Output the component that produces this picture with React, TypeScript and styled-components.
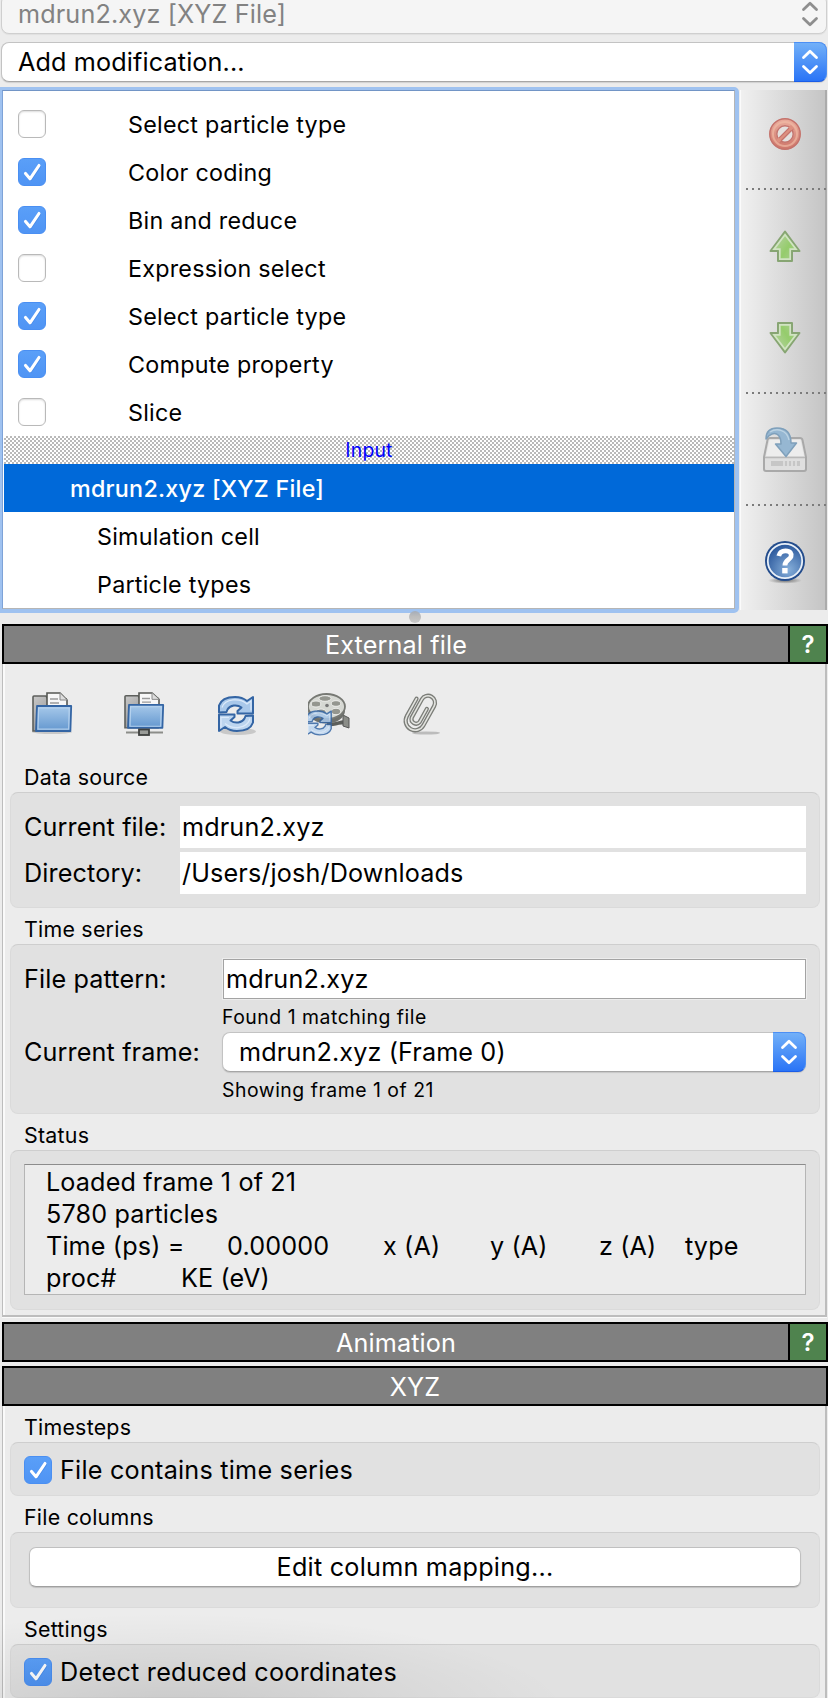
import React from "react";
import styled, { createGlobalStyle, css } from "styled-components";

const GlobalStyle = createGlobalStyle`
  *, *::before, *::after { box-sizing: border-box; }
  body {
    margin: 0;
    background: #ececec;
    color: #000;
    font-family: Inter, "Liberation Sans", sans-serif;
  }
`;

const regular = css`
  font-size: 25.2px;
  letter-spacing: 0.13px;
  white-space: pre;
`;
const medium = css`
  font-size: 23.3px;
  letter-spacing: 0.25px;
  white-space: pre;
`;
const small = css`
  font-size: 21.4px;
  letter-spacing: 0.23px;
  white-space: pre;
`;
const mini = css`
  font-size: 19.4px;
  letter-spacing: 0.2px;
  white-space: pre;
`;

const Window = styled.div`
  position: relative;
  width: 828px;
  height: 1698px;
  overflow: hidden;
  display: flex;
  flex-direction: column;
  background: #ececec;
`;

/* Soft darkening that rises from the bottom edge of the window */
const BottomShade = styled.div`
  position: absolute;
  left: 0;
  bottom: 0;
  width: 100%;
  height: 110px;
  pointer-events: none;
  background: radial-gradient(ellipse 400px 100px at 170px 125px, rgba(0, 0, 0, 0.11), rgba(0, 0, 0, 0.045) 55%, transparent);
`;

const Combo = styled.div<{ $disabled?: boolean }>`
  ${regular}
  display: flex;
  align-items: center;
  justify-content: space-between;
  height: 40px;
  border: 1px solid #c3c3c3;
  border-bottom-color: #a6a6a6;
  border-radius: 8px;
  background: #fff;
  box-shadow: 0 1px 1px rgba(0, 0, 0, 0.12);
  ${(p) =>
    p.$disabled &&
    css`
      color: #828282;
      background: #f5f5f5;
      border-color: #cfcfcf;
      box-shadow: 0 1px 1px rgba(0, 0, 0, 0.05);
    `}
`;

const SourceCombo = styled(Combo)`
  flex: none;
  margin: -6px 1px 0 1px;
  padding-left: 16px;
`;

const ModifierCombo = styled(Combo)`
  flex: none;
  margin: 8px 1px 0 1px;
  padding-left: 16px;
`;

const FrameCombo = styled(Combo)`
  padding-left: 16px;
  margin-left: -1px;
`;

const Stepper = styled.div<{ $disabled?: boolean }>`
  width: 33px;
  height: 40px;
  margin: -1px -1px -1px 0;
  border-radius: 0 8px 8px 0;
  display: flex;
  align-items: center;
  justify-content: center;
  color: #fff;
  background: linear-gradient(#72b0f8, #2a74f6);
  border: 1px solid #4b8ff5;
  border-left: 0;
  border-bottom-color: #1a5de8;
  ${(p) =>
    p.$disabled &&
    css`
      color: #8e8e8e;
      background: none;
      border-color: transparent;
    `}
`;

const Pipeline = styled.div`
  display: flex;
  flex: none;
  height: 526px;
  margin-top: 5px;
`;

const ModifierList = styled.div`
  width: 739px;
  border: solid #9fc2f0;
  border-width: 3px 4px 4px 2px;
  border-radius: 0 5px 5px 0;
`;

const ListBody = styled.div`
  height: 100%;
  padding-top: 9px;
  padding-left: 1px;
  border: 1px solid #b5b5b5;
  border-top-color: #7295c6;
  border-left-color: #7ea3d8;
  background: #fff;
`;

const ListRow = styled.div<{ $indent?: number; $selected?: boolean }>`
  ${medium}
  display: flex;
  align-items: center;
  height: 48px;
  padding-left: ${(p) => p.$indent ?? 14}px;
  color: ${(p) => (p.$selected ? "#fff" : "#000")};
  background: ${(p) => (p.$selected ? "#0069d9" : "transparent")};
  font-weight: ${(p) => (p.$selected ? 500 : 400)};
`;

const ListDivider = styled.div`
  ${mini}
  display: flex;
  align-items: center;
  justify-content: center;
  height: 28px;
  color: #0000ff;
  background: repeating-conic-gradient(#b9b9b9 0 25%, #fff 0 50%) 0 0 / 4px 4px;
`;

const RowLabel = styled.span`
  margin-left: 82px;
`;

const Box = styled.span<{ $on: boolean }>`
  flex: none;
  display: flex;
  width: 28px;
  height: 28px;
  border-radius: 6px;
  background: ${(p) => (p.$on ? "linear-gradient(#5a9ff8, #4f94f4)" : "#fff")};
  border: 1px solid ${(p) => (p.$on ? "#4a8ff2" : "#b9b9b9")};
  box-shadow: ${(p) => (p.$on ? "none" : "inset 0 1px 2px rgba(0,0,0,0.14)")};
`;

const ToolStrip = styled.div`
  width: 87px;
  height: 520px;
  margin: 3px 0 0 1px;
  border-left: 1px solid #fbfbfb;
  border-right: 2px solid #ababab;
  background: linear-gradient(90deg, #f0f0f0, #c5c5c5);
  display: flex;
  flex-direction: column;
`;

const ToolSlot = styled.div<{ $h: number; $lift?: number; $drop?: number }>`
  height: ${(p) => p.$h}px;
  padding-top: ${(p) => p.$drop ?? 0}px;
  padding-bottom: ${(p) => p.$lift ?? 0}px;
  padding-left: 3px;
  display: flex;
  align-items: center;
  justify-content: center;
`;

const ToolSeparator = styled.div`
  height: 2px;
  margin: 0 -2px 0 5px;
  background: repeating-linear-gradient(90deg, #7b7b7b 0 2px, transparent 2px 6px);
`;

const Splitter = styled.div`
  position: relative;
  flex: none;
  height: 11px;
`;

const SplitterGrip = styled.div`
  position: absolute;
  left: 409px;
  top: -2px;
  width: 12px;
  height: 12px;
  border-radius: 50%;
  background: linear-gradient(#a4acb8, #bcbcbc 45%, #c8c8c8);
`;

const PanelHeader = styled.div`
  flex: none;
  display: flex;
  height: 40px;
  margin-left: 2px;
  border: 2px solid #000;
  background: #808080;
  color: #fff;
`;

const PanelTitle = styled.div`
  ${regular}
  flex: 1;
  display: flex;
  align-items: center;
  justify-content: center;
  padding-top: 1px;
`;

const HelpCell = styled.div`
  width: 38px;
  border-left: 2px solid #000;
  background: #4f834e;
  display: flex;
  align-items: center;
  justify-content: center;
  font-size: 24px;
  font-weight: 600;
`;

const Panel = styled.div<{ $h: number }>`
  flex: none;
  height: ${(p) => p.$h}px;
  margin: 0 1px 0 2px;
  padding: 0 5px 0 6px;
  border: solid #bdbdbd;
  border-width: 0 2px 2px 1px;
  box-shadow: inset 2px 0 0 #fafafa, 0 1px 0 #fafafa;
`;

const FileToolbar = styled.div`
  display: flex;
  align-items: flex-start;
  height: 100px;
  padding: 26px 0 0 23px;
  gap: 44px;
`;

const GroupTitle = styled.div<{ $h: number }>`
  ${small}
  display: flex;
  align-items: flex-end;
  height: ${(p) => p.$h}px;
  padding-left: 15px;
  padding-bottom: 2px;
  line-height: 26px;
`;

const Group = styled.div<{ $h: number; $top?: number }>`
  height: ${(p) => p.$h}px;
  padding: ${(p) => p.$top ?? 13}px 13px 0 14px;
  margin-left: 1px;
  border: 1px solid #dadada;
  border-top-color: #cecece;
  border-radius: 8px;
  background: #e1e1e1;
`;

const FormGrid = styled.div<{ $label: number }>`
  display: grid;
  grid-template-columns: ${(p) => p.$label}px 1fr;
`;

const FormLabel = styled.div<{ $gap?: number }>`
  ${regular}
  display: flex;
  align-items: center;
  margin-left: -1px;
  padding-bottom: ${(p) => p.$gap ?? 0}px;
`;

const PlainField = styled.div`
  ${regular}
  display: flex;
  align-items: center;
  height: 42px;
  margin-bottom: 4px;
  padding-left: 2px;
  background: #fff;
`;

const LineEdit = styled.div`
  ${regular}
  display: flex;
  align-items: center;
  height: 40px;
  padding-left: 2px;
  border: 1px solid #a3a3a3;
  background: #fff;
  box-shadow: 0 0 0 1px #ededed;
`;

const Hint = styled.div`
  ${mini}
  grid-column: 2;
  height: 33px;
  line-height: 36px;
  letter-spacing: 0.52px;
  margin-left: -1px;
`;

const StatusBox = styled.div`
  ${regular}
  height: 131px;
  margin-left: -1px;
  padding-left: 21px;
  line-height: 32px;
  padding-top: 1px;
  border: 1px solid #b5b5b5;
  border-top-color: #8c8c8c;
  background: #ececec;
`;

const StatusLine = styled.div`
  display: flex;
`;

const StatusCell = styled.span<{ $w: number }>`
  width: ${(p) => p.$w}px;
`;

const CheckRow = styled.div`
  ${regular}
  display: flex;
  align-items: center;
  height: 28px;
  gap: 8px;
  margin-left: -1px;
  letter-spacing: 0.23px;
`;

const PushButton = styled.div`
  ${regular}
  display: flex;
  align-items: center;
  justify-content: center;
  height: 40px;
  margin: 0 5px 0 4px;
  border: 1px solid #c0c0c0;
  border-bottom-color: #a0a0a0;
  border-radius: 7px;
  background: #fff;
  box-shadow: 0 1px 1px rgba(0, 0, 0, 0.15);
  letter-spacing: 0.23px;
`;

const Gap = styled.div<{ $h: number }>`
  flex: none;
  height: ${(p) => p.$h}px;
`;

const Chevrons = () => (
  <svg width="18" height="26" viewBox="0 0 18 26" fill="none" stroke="currentColor" strokeWidth="2.8" strokeLinecap="round" strokeLinejoin="round">
    <path d="M2.5 8.5 L9 2.2 L15.5 8.5 M2.5 17.5 L9 23.8 L15.5 17.5" />
  </svg>
);

const Check = ({ on }: { on: boolean }) => (
  <Box $on={on}>
    {on && (
      <svg width="26" height="26" viewBox="0 0 26 26" fill="none" strokeLinecap="round" strokeLinejoin="round">
        <path d="M6.5 15 L11.5 20.5 L20.5 7.5" stroke="#2d70d0" strokeOpacity=".35" strokeWidth="3" />
        <path d="M6.5 14.5 L11 19.8 L20 6.5" stroke="#fff" strokeWidth="3.1" />
      </svg>
    )}
  </Box>
);

const ForbidIcon = () => (
  <svg width="32" height="32" viewBox="0 0 32 32">
    <defs>
      <linearGradient id="fb" x1="0" y1="0" x2="0" y2="1">
        <stop offset="0" stopColor="#e8a898" />
        <stop offset="1" stopColor="#d07a6e" />
      </linearGradient>
    </defs>
    <circle cx="16" cy="16" r="12" fill="none" stroke="url(#fb)" strokeWidth="7" />
    <circle cx="16" cy="16" r="8.2" fill="#e4e0de" stroke="#c4736c" strokeWidth="1.4" />
    <path d="M8.6 21.4 L21.4 8.6 L24 11 L11 24Z" fill="#dd9080" stroke="#c4736c" strokeWidth="1.3" />
    <path d="M8.5 23.5 L11 21 M21 11 L23.5 8.5" stroke="#dd9080" strokeWidth="4" />
    <circle cx="16" cy="16" r="12" fill="none" stroke="#efb9a4" strokeOpacity=".7" strokeWidth="2" />
    <circle cx="16" cy="16" r="15.2" fill="none" stroke="#c4736c" strokeWidth="1.5" />
  </svg>
);

const ArrowIcon = ({ down }: { down?: boolean }) => (
  <svg width="32" height="32" viewBox="0 0 32 32">
    <defs>
      <linearGradient id={down ? "ad" : "au"} x1="0" y1="0" x2="1" y2=".7">
        <stop offset=".2" stopColor="#b5d2a0" />
        <stop offset=".65" stopColor="#95cc6c" />
        <stop offset="1" stopColor="#a8cf8c" />
      </linearGradient>
    </defs>
    <g transform={down ? "matrix(1 0 0 -1 0 32)" : undefined}>
      <path d="M16 1.5 L30.5 21 H23 V31 H9 V21 H1.5 Z" fill={`url(#${down ? "ad" : "au"})`} stroke="#87a573" strokeWidth="2" strokeLinejoin="round" />
      <path d="M16 4.8 L27 19.2 H21.2 V29.2 H10.8 V19.2 H5 Z" fill="none" stroke="#d1e3c3" strokeWidth="1.7" />
    </g>
  </svg>
);

const SaveIcon = () => (
  <svg width="44" height="46" viewBox="0 0 44 46">
    <path d="M7 12 H37 Q39 12 39.5 14 L43 31 V43 Q43 45 41 45 H3 Q1 45 1 43 V31 L4.5 14 Q5 12 7 12Z" fill="#dfdfdf" stroke="#a9a9a9" strokeWidth="2" />
    <path d="M6.5 14 H37.5 L41 30 H3Z" fill="#ededed" />
    <path d="M2 31.5 H42" stroke="#b9b9b9" strokeWidth="1.5" />
    <rect x="8" y="35" width="29" height="5" fill="#c6c6c6" />
    <path d="M21 35v5M25 35v5M29 35v5M33 35v5" stroke="#e3e3e3" strokeWidth="1.5" />
    <path d="M3 13 C3 4 8 2 14 2 C23 2 28 6 28 17 H33.5 L23 30.5 L12.5 18 H18 C18 10 14 6 9 8 C6 9 5 10 3 13Z" fill="#96b7d2" stroke="#7fa0bb" strokeWidth="1.5" strokeLinejoin="round" />
    <path d="M7 6 C14 1.5 24 4 26 14" fill="none" stroke="#bcd3e3" strokeWidth="1.3" />
  </svg>
);

const HelpIcon = () => (
  <svg width="44" height="44" viewBox="0 0 44 44">
    <defs>
      <radialGradient id="hp" cx=".6" cy=".75" r=".7">
        <stop offset="0" stopColor="#86afda" />
        <stop offset="1" stopColor="#2f5c9f" />
      </radialGradient>
      <radialGradient id="hs">
        <stop offset="0" stopColor="#555" stopOpacity=".8" />
        <stop offset="1" stopColor="#555" stopOpacity="0" />
      </radialGradient>
    </defs>
    <ellipse cx="22" cy="40.5" rx="17" ry="3.2" fill="url(#hs)" />
    <circle cx="22" cy="21" r="20" fill="#234c8c" />
    <circle cx="22" cy="21" r="17.2" fill="url(#hp)" stroke="#e9f0f8" strokeWidth="1.8" />
    <path d="M15.8 16 C16.8 11.7 19.5 10.9 22.5 10.9 C27.5 10.9 28.8 14 28 16.6 C27 19.8 21.9 20.3 21.9 25.4" fill="none" stroke="#fff" strokeWidth="4.8" />
    <rect x="19.2" y="28" width="5.4" height="5.4" fill="#fff" />
  </svg>
);

const FolderArt = () => (
  <>
    <defs>
      <linearGradient id="fo" x1="0" y1="0" x2="0" y2="1">
        <stop offset="0" stopColor="#a7c9ea" />
        <stop offset="1" stopColor="#6397cf" />
      </linearGradient>
      <linearGradient id="fg" x1="0" y1="0" x2="1" y2="1">
        <stop offset="0" stopColor="#c9c9c9" />
        <stop offset="1" stopColor="#777" />
      </linearGradient>
    </defs>
    <path d="M1 39 V5 Q1 4 2 4 H14 L16 7 H34 V39Z" fill="url(#fg)" stroke="#5d5f5c" strokeWidth="1.6" />
    <path d="M15 16 V1 H28 L35 8 V16Z" fill="#f7f7f7" stroke="#555753" strokeWidth="1.6" />
    <path d="M28 1 V8 H35" fill="#ddd" stroke="#888" strokeWidth="1" />
    <path d="M18 7h8M18 11h9" stroke="#9a9a9a" strokeWidth="1.6" />
    <path d="M5 14 H39.2 L38.4 39 H4Z" fill="url(#fo)" stroke="#3465a4" strokeWidth="1.8" strokeLinejoin="round" />
    <path d="M6.6 16 H37.2 L36.7 37.2 H6Z" fill="none" stroke="#bcd6f0" strokeOpacity=".85" strokeWidth="1.2" />
  </>
);

const FolderIcon = () => (
  <svg width="48" height="48" viewBox="0 -2 48 48">
    <ellipse cx="20" cy="40" rx="20" ry="2" fill="#000" opacity=".15" />
    <FolderArt />
  </svg>
);

const NetworkFolderIcon = () => (
  <svg width="48" height="48" viewBox="0 -2 48 48">
    <g transform="scale(1 .92)">
      <FolderArt />
    </g>
    <path d="M2 40.5 H39" stroke="#8c8d89" strokeWidth="2" />
    <rect x="15" y="37.5" width="10" height="5.5" fill="#9a9c98" stroke="#3f413f" strokeWidth="1.8" />
  </svg>
);

const ReloadArt = () => (
  <>
    <path d="M1 17 V10 C3 4 8 1.5 17 1.5 C23 1.5 26 3 29 5.5 L35 1.5 V18 H19.5 V15.5 L23.5 12 C19 8.5 12 9.5 9.5 14 L8.5 16.5Z" fill="#a9c8ea" stroke="#3465a4" strokeWidth="2" strokeLinejoin="round" />
    <path d="M35 20 V27 C33 33 28 35.5 19 35.5 C13 35.5 10 34 7 31.5 L1 35.5 V19 H16.5 V21.5 L12.5 25 C17 28.5 24 27.5 26.5 23 L27.5 20.5Z" fill="#bdd5ef" stroke="#3465a4" strokeWidth="2" strokeLinejoin="round" />
    <path d="M4 12 C7 3 22 2 29 8.5 L33 5.5 V15 M3 32 V22 H11 M7 28 C14 34 29 34 32 23" fill="none" stroke="#dceafa" strokeWidth="1.2" />
  </>
);

const ReloadIcon = () => (
  <svg width="48" height="48" viewBox="-2 -5.5 48 48">
    <ellipse cx="20" cy="36" rx="18" ry="3.5" fill="#000" opacity=".15" />
    <ReloadArt />
  </svg>
);

const MovieReloadIcon = () => (
  <svg width="48" height="48" viewBox="3 -2 48 48">
    <path d="M22 30 C32 32 36 27 44 28 V35 C36 29 30 36 22 34Z" fill="#5c5e5a" />
    <path d="M38 23 L44 26 V36 L38 34Z" fill="#8b8d88" stroke="#555" strokeWidth="1" />
    <ellipse cx="21.5" cy="18.5" rx="18.5" ry="13" fill="#6e706c" />
    <ellipse cx="21.5" cy="14.5" rx="18.5" ry="12.5" fill="#d6d8d3" stroke="#777974" strokeWidth="1.8" />
    <g fill="#94968f" stroke="#f0f1ee" strokeWidth=".9">
      <ellipse cx="20" cy="6.5" rx="6" ry="2.8" />
      <ellipse cx="31" cy="11.5" rx="4.6" ry="2.8" />
      <ellipse cx="11" cy="12" rx="4.8" ry="3" />
      <ellipse cx="31" cy="19.5" rx="4.6" ry="3.2" />
      <ellipse cx="16" cy="20" rx="5.2" ry="3" />
    </g>
    <circle cx="22" cy="13.5" r="1.8" fill="#777" />
    <g transform="translate(1 18) scale(.72 .7)" opacity=".85">
      <ReloadArt />
    </g>
  </svg>
);

const ClipIcon = () => (
  <svg width="48" height="48" viewBox="0 -2 48 48">
    <ellipse cx="26" cy="41" rx="14" ry="1.6" fill="#000" opacity=".2" />
    <g transform="rotate(29 20 20)" fill="none" strokeLinecap="round">
      <g stroke="#7b7d78" strokeWidth="4.2">
        <path d="M10.5 10 V30 A9.5 9.5 0 0 0 29.5 30 V8 A7 7 0 0 0 15.5 8 V29 A4.6 4.6 0 0 0 24.5 29 V14" />
      </g>
      <g stroke="#e2e3df" strokeWidth="1.6">
        <path d="M10.5 10 V30 A9.5 9.5 0 0 0 29.5 30 V8 A7 7 0 0 0 15.5 8 V29 A4.6 4.6 0 0 0 24.5 29 V14" />
      </g>
    </g>
  </svg>
);

const modifiers: Array<[string, boolean]> = [
  ["Select particle type", false],
  ["Color coding", true],
  ["Bin and reduce", true],
  ["Expression select", false],
  ["Select particle type", true],
  ["Compute property", true],
  ["Slice", false],
];

export default function App() {
  return (
    <>
      <GlobalStyle />
      <Window>
        <SourceCombo $disabled>
          <span>mdrun2.xyz [XYZ File]</span>
          <Stepper $disabled>
            <Chevrons />
          </Stepper>
        </SourceCombo>
        <ModifierCombo>
          <span>Add modification...</span>
          <Stepper>
            <Chevrons />
          </Stepper>
        </ModifierCombo>

        <Pipeline>
          <ModifierList>
            <ListBody>
              {modifiers.map(([name, on], i) => (
                <ListRow key={i}>
                  <Check on={on} />
                  <RowLabel>{name}</RowLabel>
                </ListRow>
              ))}
              <ListDivider>Input</ListDivider>
              <ListRow $indent={66} $selected>
                mdrun2.xyz [XYZ File]
              </ListRow>
              <ListRow $indent={93}>Simulation cell</ListRow>
              <ListRow $indent={93}>Particle types</ListRow>
            </ListBody>
          </ModifierList>
          <ToolStrip>
            <ToolSlot $h={98} $lift={10}>
              <ForbidIcon />
            </ToolSlot>
            <ToolSeparator />
            <ToolSlot $h={112}>
              <ArrowIcon />
            </ToolSlot>
            <ToolSlot $h={90} $lift={18}>
              <ArrowIcon down />
            </ToolSlot>
            <ToolSeparator />
            <ToolSlot $h={110}>
              <SaveIcon />
            </ToolSlot>
            <ToolSeparator />
            <ToolSlot $h={104} $drop={8}>
              <HelpIcon />
            </ToolSlot>
          </ToolStrip>
        </Pipeline>
        <Splitter>
          <SplitterGrip />
        </Splitter>

        <PanelHeader>
          <PanelTitle>External file</PanelTitle>
          <HelpCell>?</HelpCell>
        </PanelHeader>
        <Panel $h={653}>
          <FileToolbar>
            <FolderIcon />
            <NetworkFolderIcon />
            <ReloadIcon />
            <MovieReloadIcon />
            <ClipIcon />
          </FileToolbar>
          <GroupTitle $h={28}>Data source</GroupTitle>
          <Group $h={116}>
            <FormGrid $label={155}>
              <FormLabel $gap={4}>Current file:</FormLabel>
              <PlainField>mdrun2.xyz</PlainField>
              <FormLabel $gap={4}>Directory:</FormLabel>
              <PlainField>/Users/josh/Downloads</PlainField>
            </FormGrid>
          </Group>
          <GroupTitle $h={36}>Time series</GroupTitle>
          <Group $h={170} $top={14}>
            <FormGrid $label={198}>
              <FormLabel>File pattern:</FormLabel>
              <LineEdit>mdrun2.xyz</LineEdit>
              <Hint>Found 1 matching file</Hint>
              <FormLabel>Current frame:</FormLabel>
              <FrameCombo>
                <span>mdrun2.xyz (Frame 0)</span>
                <Stepper>
                  <Chevrons />
                </Stepper>
              </FrameCombo>
              <Hint>Showing frame 1 of 21</Hint>
            </FormGrid>
          </Group>
          <GroupTitle $h={36}>Status</GroupTitle>
          <Group $h={160}>
            <StatusBox>
              <StatusLine>Loaded frame 1 of 21</StatusLine>
              <StatusLine>5780 particles</StatusLine>
              <StatusLine>
                <StatusCell $w={181}>Time (ps) =</StatusCell>
                <StatusCell $w={156}>0.00000</StatusCell>
                <StatusCell $w={107}>x (A)</StatusCell>
                <StatusCell $w={109}>y (A)</StatusCell>
                <StatusCell $w={86}>z (A)</StatusCell>
                <span>type</span>
              </StatusLine>
              <StatusLine>
                <StatusCell $w={135}>proc#</StatusCell>
                <span>KE (eV)</span>
              </StatusLine>
            </StatusBox>
          </Group>
        </Panel>
        <Gap $h={5} />
        <PanelHeader>
          <PanelTitle>Animation</PanelTitle>
          <HelpCell>?</HelpCell>
        </PanelHeader>
        <Gap $h={4} />
        <PanelHeader>
          <PanelTitle>XYZ</PanelTitle>
        </PanelHeader>
        <Panel $h={320}>
          <GroupTitle $h={36}>Timesteps</GroupTitle>
          <Group $h={54}>
            <CheckRow>
              <Check on />
              File contains time series
            </CheckRow>
          </Group>
          <GroupTitle $h={36}>File columns</GroupTitle>
          <Group $h={76} $top={14}>
            <PushButton>Edit column mapping...</PushButton>
          </Group>
          <GroupTitle $h={36}>Settings</GroupTitle>
          <Group $h={54}>
            <CheckRow>
              <Check on />
              Detect reduced coordinates
            </CheckRow>
          </Group>
        </Panel>
        <BottomShade />
      </Window>
    </>
  );
}
